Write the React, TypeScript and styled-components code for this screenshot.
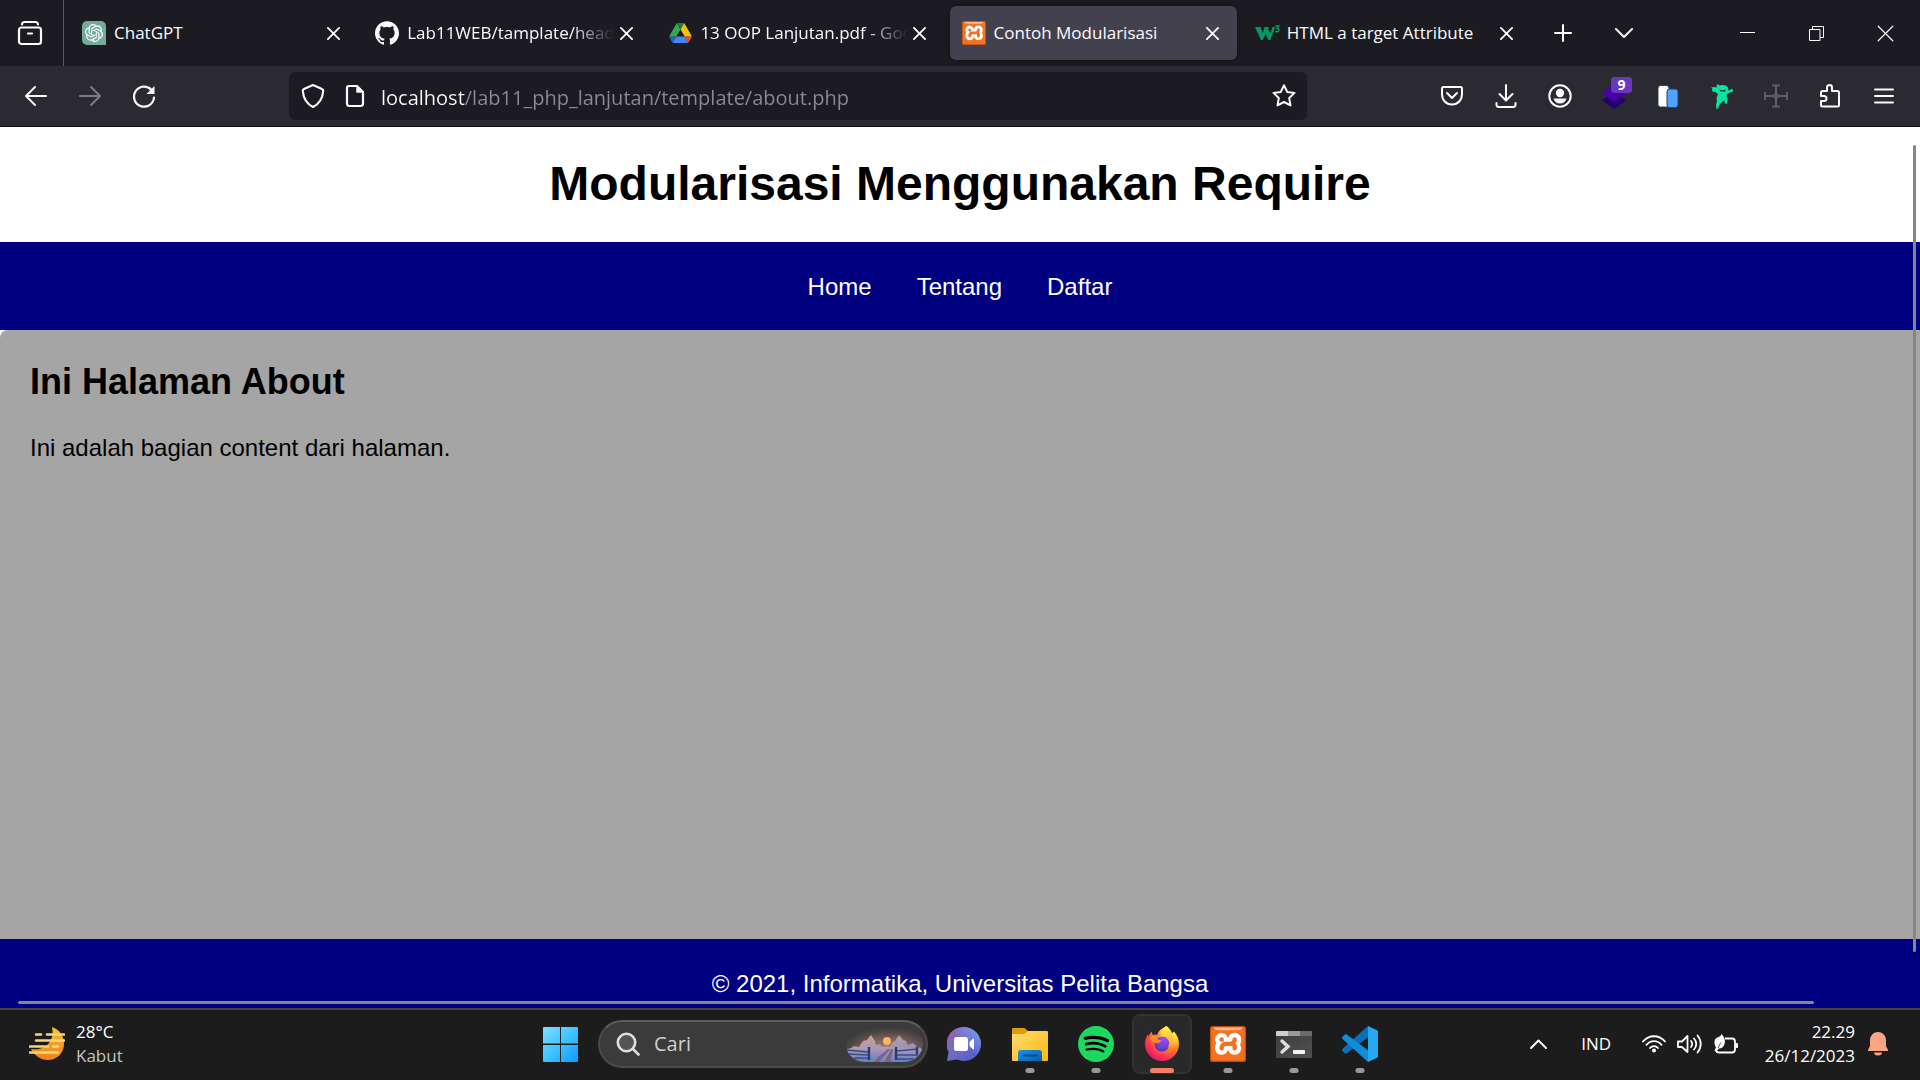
import React from "react";
import styled, { createGlobalStyle, css } from "styled-components";
import { SiOpenai, SiXampp, SiSpotify, SiGithub } from "react-icons/si";

const ui = `"Open Sans", "Noto Sans", "Liberation Sans", sans-serif`;
const arial = `"Liberation Sans", Arial, sans-serif`;

const GlobalStyle = createGlobalStyle`
  *, *::before, *::after { box-sizing: border-box; }
  body { margin: 0; }
  button, input { font: inherit; color: inherit; border: 0; padding: 0; background: none; outline: none; }
  svg { display: block; flex: none; }
`;

const Screen = styled.div`
  display: flex;
  flex-direction: column;
  height: 100vh;
  overflow: hidden;
  font-family: ${ui};
`;

/* ---------- Browser chrome ---------- */

const TabBar = styled.header`
  display: flex;
  height: 66px;
  flex: none;
  background: #1c1b22;
  color: #fbfbfe;
`;

const ViewButton = styled.button`
  display: grid;
  place-items: center;
  width: 64px;
  padding-right: 4px;
  border-right: 1px solid #5b5b66;
`;

const Tabs = styled.div`
  display: grid;
  grid-template-columns: repeat(5, minmax(0, 1fr));
  gap: 6px;
  flex: 0 1 1468px;
  padding: 6px 2px 6px 6px;
`;

const Tab = styled.div<{ $active?: boolean }>`
  display: flex;
  align-items: center;
  height: 54px;
  padding: 0 12px;
  border-radius: 6px;
  ${(p) =>
    p.$active &&
    css`
      background: #42414d;
      box-shadow: 0 0 4px rgba(0, 0, 0, 0.5);
    `}
`;

const TabTitle = styled.button<{ $fade?: boolean }>`
  display: flex;
  align-items: center;
  flex: 1;
  min-width: 0;
  gap: 8px;
  font-size: 17px;
  line-height: 24px;
  text-align: left;
  white-space: nowrap;
  overflow: hidden;
  ${(p) =>
    p.$fade &&
    css`
      mask-image: linear-gradient(to left, transparent, #000 44px);
    `}
`;

const Favicon = styled.span`
  display: grid;
  place-items: center;
  width: 24px;
  height: 24px;
  flex: none;
`;

const CloseButton = styled.button`
  display: grid;
  place-items: center;
  width: 24px;
  height: 24px;
`;

const StripButton = styled.button`
  display: grid;
  place-items: center;
  width: 61px;
`;

const WindowControls = styled.div`
  display: flex;
  margin-left: auto;
`;

const WindowButton = styled.button`
  display: grid;
  place-items: center;
  width: 69px;
`;

const Toolbar = styled.div`
  display: flex;
  align-items: center;
  justify-content: space-between;
  flex: none;
  height: 61px;
  padding: 0 9px;
  background: #2b2a33;
  border-bottom: 1px solid #0c0c0d;
  color: #fbfbfe;
`;

const ToolGroup = styled.div`
  display: flex;
`;

const ToolButton = styled.button`
  display: grid;
  place-items: center;
  position: relative;
  width: 54px;
  height: 48px;
  &:disabled {
    color: #7d7c83;
  }
`;

const Badge = styled.span`
  position: absolute;
  top: 5px;
  left: 24px;
  width: 21px;
  height: 16px;
  border-radius: 3px;
  background: #6a37bd;
  color: #fff;
  font-size: 14px;
  font-weight: 700;
  line-height: 16px;
  text-align: center;
`;

const AddressBar = styled.label`
  display: flex;
  align-items: center;
  flex: 0 1 1018px;
  height: 48px;
  margin-left: 118px;
  margin-right: auto;
  padding: 0 12px;
  border-radius: 6px;
  background: #1c1b22;
`;

const AddressIcon = styled.span`
  display: grid;
  place-items: center;
  width: 42px;
  &:first-child {
    width: 24px;
    margin-right: 9px;
  }
`;

const AddressInput = styled.input`
  flex: 1;
  min-width: 0;
  margin-left: 5px;
  height: 48px;
  padding-top: 2px;
  font-size: 20px;
  background: linear-gradient(to right, #fbfbfe 84px, #8b8a93 84px);
  background-clip: text;
  -webkit-background-clip: text;
  color: transparent;
`;

const StarButton = styled.button`
  display: grid;
  place-items: center;
  width: 24px;
`;

/* ---------- Web page ---------- */

const Viewport = styled.div`
  position: relative;
  display: flex;
  flex-direction: column;
  flex: 1;
  min-height: 0;
  overflow: hidden;
  background: #fff;
  color: #000;
  font-family: ${arial};
  font-size: 24px;
  line-height: 28px;
`;

const PageTitle = styled.h1`
  margin: 0;
  padding: 29px 30px 31px;
  font-size: 48px;
  line-height: 55px;
  text-align: center;
`;

const PageNav = styled.nav`
  display: flex;
  justify-content: center;
  gap: 45px;
  padding: 31px 30px 29px;
  background: #000080;
`;

const NavLink = styled.a`
  color: #fff;
  text-decoration: none;
`;

const Content = styled.main`
  flex: 1;
  padding: 31px 30px;
  background: #a5a5a5;
  border-top-left-radius: 8px;
`;

const ContentTitle = styled.h2`
  margin: 0 0 31px;
  font-size: 36px;
  line-height: 42px;
`;

const Paragraph = styled.p`
  margin: 0;
`;

const PageFooter = styled.footer`
  padding: 31px 30px 10px;
  background: #000080;
  color: #fff;
  text-align: center;
`;

const VerticalThumb = styled.div`
  position: absolute;
  top: 18px;
  right: 4px;
  bottom: 56px;
  width: 3px;
  border-radius: 2px;
  background: #868686;
`;

const HorizontalThumb = styled.div`
  position: absolute;
  left: 18px;
  right: 106px;
  bottom: 4px;
  height: 3px;
  border-radius: 2px;
  background: #868686;
`;

/* ---------- Taskbar ---------- */

const Taskbar = styled.footer`
  display: grid;
  grid-template-columns: 1fr auto 1fr;
  align-items: center;
  flex: none;
  height: 72px;
  padding-bottom: 2px;
  border-top: 2px solid #434343;
  background: #1c1c1c;
  color: #fff;
  font-size: 17px;
  line-height: 24px;
`;

const Weather = styled.button`
  display: flex;
  align-items: center;
  justify-self: start;
  gap: 11px;
  padding-left: 29px;
  text-align: left;
`;

const Stack = styled.span`
  display: flex;
  flex-direction: column;
`;

const Muted = styled.span`
  color: #c4c4c4;
`;

const Apps = styled.div`
  display: flex;
  align-items: center;
  gap: 6px;
`;

const AppButton = styled.button<{ $active?: boolean }>`
  display: grid;
  place-items: center;
  position: relative;
  width: 60px;
  height: 60px;
  border: 2px solid transparent;
  border-radius: 8px;
  ${(p) =>
    p.$active &&
    css`
      background: #292929;
      border-color: #323232;
    `}
`;

const Running = styled.span<{ $active?: boolean }>`
  position: absolute;
  bottom: -1px;
  left: 50%;
  transform: translateX(-50%);
  width: ${(p) => (p.$active ? 24 : 9)}px;
  height: 5px;
  border-radius: 3px;
  background: ${(p) => (p.$active ? "#f4806a" : "#999")};
`;

const Search = styled.label`
  display: flex;
  align-items: center;
  width: 330px;
  height: 48px;
  margin-left: 2px;
  padding: 0 2px 0 16px;
  border: 2px solid #4a4a4a;
  border-top-color: #5c5c5c;
  border-radius: 24px;
  background: #3b3b3b;
`;

const SearchInput = styled.input`
  flex: 1;
  min-width: 0;
  margin-left: 14px;
  font-size: 20px;
  &::placeholder {
    color: #cfcfcf;
    opacity: 1;
  }
`;

const Tray = styled.div`
  display: flex;
  align-items: center;
  justify-self: end;
  padding-right: 32px;
`;

const TrayButton = styled.button`
  display: grid;
  place-items: center;
  width: 36px;
  height: 48px;
`;

const Language = styled.button`
  width: 79px;
`;

const Clock = styled.button`
  display: flex;
  flex-direction: column;
  align-items: flex-end;
  padding: 0 13px 0 21px;
`;

/* ---------- Drawings ---------- */

const line = {
  fill: "none",
  stroke: "currentColor",
  strokeWidth: 2,
  strokeLinecap: "round" as const,
  strokeLinejoin: "round" as const,
};

const Cross = ({ size = 13, w = 2 }: { size?: number; w?: number }) => (
  <svg width={size} height={size} viewBox="0 0 14 14" {...line} strokeWidth={w}>
    <path d="M1 1l12 12M13 1L1 13" />
  </svg>
);

const ViewIcon = () => (
  <svg width="26" height="26" viewBox="0 0 26 26" {...line}>
    <path d="M5 4.500C5 3 6 2 8 2h10c2 0 3 1 3 2.500" strokeWidth="2.2" />
    <rect x="2" y="7.5" width="22" height="16.5" rx="2.5" strokeWidth="2.2" />
    <path d="M11 13.500h4" strokeWidth="2.2" />
  </svg>
);

const ChatIcon = () => (
  <svg width="24" height="24" viewBox="0 0 24 24">
    <path d="M5 0h14a5 5 0 0 1 5 5v19H5a5 5 0 0 1-5-5V5a5 5 0 0 1 5-5z" fill="#74aa9c" />
    <SiOpenai x="3" y="3" size={18} color="#fff" />
  </svg>
);

const DriveIcon = () => (
  <svg width="23" height="20" viewBox="0 0 87.3 78">
    <path d="M6.600 66.850l3.850 6.650c.8 1.400 1.950 2.500 3.300 3.300l13.750-23.800H0c0 1.550.4 3.100 1.200 4.500z" fill="#1967d2" />
    <path d="M43.650 25L29.900 1.200c-1.350.8-2.500 1.900-3.300 3.300l-25.400 44A9.060 9.060 0 0 0 0 53h27.500z" fill="#34a853" />
    <path d="M73.550 76.800c1.350-.8 2.500-1.900 3.300-3.300l1.600-2.750 7.650-13.250c.8-1.400 1.200-2.950 1.200-4.500H59.800l5.850 11.500z" fill="#ea4335" />
    <path d="M43.650 25L57.400 1.200C56.050.4 54.500 0 52.900 0H34.400c-1.600 0-3.150.45-4.500 1.200z" fill="#188038" />
    <path d="M59.800 53H27.500L13.750 76.800c1.350.8 2.900 1.200 4.500 1.200h50.800c1.600 0 3.150-.45 4.500-1.200z" fill="#4285f4" />
    <path d="M73.400 26.500l-12.700-22c-.8-1.400-1.950-2.500-3.300-3.300L43.650 25 59.800 53h27.450c0-1.550-.4-3.100-1.200-4.500z" fill="#fbbc04" />
  </svg>
);

const XamppIcon = ({ size }: { size: number }) => (
  <svg width={size} height={size} viewBox="0 0 24 24">
    <rect x="2" y="2" width="20" height="20" fill="#fff" />
    <SiXampp size={24} color="#f3711f" />
    <rect x=".4" y=".4" width="23.200" height="23.200" rx="1.500" fill="none" stroke="#b9520f" strokeWidth=".8" />
    <path d="M2.500 1h19c0 1.200-2 1.800-4 1.800h-11c-2 0-4-.6-4-1.800z" fill="#ffb98a" />
  </svg>
);

const W3Icon = () => (
  <svg width="25" height="24" viewBox="0 0 25 24">
    <path d="M0 6h5.500l2.300 6L9.500 6h4.300l-.6 2.200 2.200 4L17.500 6h2.700l-4.700 13h-2.200L10.700 13 7.800 19H6z" fill="#059862" />
    <path d="M20.300 5h3.400l-1.700 2.300c1.600 0 2.200.9 1.800 2.200-.5 1.300-2.200 1.600-3.500.8" fill="none" stroke="#059862" strokeWidth="1.500" />
  </svg>
);

const BackIcon = () => (
  <svg width="24" height="24" viewBox="0 0 24 24" {...line}>
    <path d="M22 12H2.500M11 3L2 12l9 9" />
  </svg>
);

const ForwardIcon = () => (
  <svg width="24" height="24" viewBox="0 0 24 24" {...line}>
    <path d="M2 12h19.500M13 3l9 9-9 9" />
  </svg>
);

const ReloadIcon = () => (
  <svg width="26" height="26" viewBox="0 0 26 26" {...line}>
    <path d="M23 14.500A10 10 0 1 1 20.500 7" strokeWidth="2.200" />
    <path d="M23.500 3v8h-8z" fill="currentColor" stroke="none" />
  </svg>
);

const ShieldIcon = () => (
  <svg width="24" height="26" viewBox="0 0 24 26" {...line} strokeWidth={2.2}>
    <path d="M12 2l9 4c1 .4 1.300 1 1.200 2C21.600 15.500 18 21 12 24 6 21 2.400 15.500 1.800 8c-.1-1 .2-1.600 1.200-2z" />
  </svg>
);

const FileIcon = () => (
  <svg width="20" height="24" viewBox="0 0 20 24" {...line} strokeWidth={2.2}>
    <path d="M4 2h8l6 6v11.500a2.500 2.500 0 0 1-2.500 2.500H4.500A2.500 2.500 0 0 1 2 19.500V4a2 2 0 0 1 2-2z" />
    <path d="M12 2v6h6z" fill="currentColor" strokeWidth="1.500" />
  </svg>
);

const StarIcon = () => (
  <svg width="26" height="26" viewBox="0 0 26 26" {...line} strokeWidth={2}>
    <path d="M13 2.300l3.200 6.600 7.300 1-5.300 5.100 1.300 7.400L13 19l-6.500 3.400L7.800 15 2.500 9.900l7.300-1z" />
  </svg>
);

const PocketIcon = () => (
  <svg width="24" height="22" viewBox="0 0 24 22" {...line}>
    <path d="M3.500 2h17A1.500 1.500 0 0 1 22 3.500V9c0 6-4 10.500-10 10.500S2 15 2 9V3.500A1.500 1.500 0 0 1 3.500 2z" />
    <path d="M7 8l5 5 5-5" />
  </svg>
);

const DownloadIcon = () => (
  <svg width="22" height="24" viewBox="0 0 22 24" {...line}>
    <path d="M11 1v15M4.500 10l6.500 6.500L17.500 10M1.500 19v1.500A2.500 2.500 0 0 0 4 23h14a2.500 2.500 0 0 0 2.500-2.500V19" />
  </svg>
);

const AccountIcon = () => (
  <svg width="24" height="24" viewBox="0 0 24 24">
    <circle cx="12" cy="12" r="10.700" fill="none" stroke="currentColor" strokeWidth="2" />
    <circle cx="12" cy="9" r="4.200" fill="currentColor" />
    <path d="M5.500 14.500h13c-.7 3-3.200 5-6.500 5s-5.800-2-6.500-5z" fill="currentColor" />
  </svg>
);

const LayersIcon = () => (
  <svg width="24" height="26" viewBox="0 0 24 26">
    <path d="M12 9l12 8-12 9L0 17z" fill="#1f0070" />
    <path d="M12 1l12 9-12 9L0 10z" fill="#4a00a8" />
  </svg>
);

const CardsIcon = () => (
  <svg width="22" height="24" viewBox="0 0 22 24">
    <rect x="1" y="1.500" width="11" height="21.500" rx="2.500" fill="#fff" stroke="#26406b" />
    <rect x="10" y="5" width="11" height="18.500" rx="2.500" fill="#4da3ff" stroke="#26406b" />
  </svg>
);

const SpriteIcon = () => (
  <svg width="24" height="25" viewBox="0 0 24 25">
    <path
      d="M1 3.500L4.500 3 7 3.500l-.5-2L8 0l1.500 1.500L12 1l4 .5 2 2 .5 3L22 5l1 .5-.5 3-1.500-.5-4 2-.5 2.500 1 2-.5 5.500-2-.5-1-3-2 1.500-2.500 2.500L8 24.500 6.500 25 6 21l1-4-.5-3 1.500-4-3-2.500L3.500 8 2 7l.5-2z"
      fill="#0be3a0"
    />
    <path d="M9.500 5.500l3 1 3.500-1-1 2h-4.500z" fill="#2b2a33" />
  </svg>
);

const GridIcon = () => (
  <svg width="24" height="24" viewBox="0 0 24 24" fill="none" stroke="#5e5d63" strokeWidth="2">
    <path d="M12 1v22M1 12h22M8 1.500h8M8 22.500h8M1 8v8M23 8v8" />
    <path d="M9.500 12h5M12 9.500v5" strokeWidth="3.500" />
  </svg>
);

const PuzzleIcon = () => (
  <svg width="24" height="26" viewBox="0 0 24 26" {...line}>
    <path d="M4.500 8H9V4.500a2.500 2.500 0 0 1 5 0V8h5.500A1.500 1.500 0 0 1 21 9.500V22a1.500 1.500 0 0 1-1.500 1.500h-15A1.500 1.500 0 0 1 3 22v-4h3a2.500 2.500 0 0 0 0-5H3V9.500A1.500 1.500 0 0 1 4.500 8z" />
  </svg>
);

const MenuIcon = () => (
  <svg width="20" height="16" viewBox="0 0 20 16" {...line}>
    <path d="M1 1.500h18M1 8h18M1 14.500h18" />
  </svg>
);

const FogIcon = () => (
  <svg width="36" height="36" viewBox="0 0 36 36">
    <defs>
      <linearGradient id="moon" x1="0" y1="0" x2="0" y2="1">
        <stop offset="0" stopColor="#f3c23c" />
        <stop offset="1" stopColor="#f07f1c" />
      </linearGradient>
    </defs>
    <path d="M23 1c8 3 12 9 12 17 0 9-7 16-16 16C11 34 5 29 2 23c9 1 14-1 18-6 4-5 4-11 3-16z" fill="url(#moon)" />
    <path d="M7 8.500h5M18 8.500h17M7 14.500h28M1 20.500h18M24 20.500h5M1 26.500h28" stroke="#f5d677" strokeWidth="2.600" strokeLinecap="round" />
  </svg>
);

const WindowsIcon = () => (
  <svg width="35" height="35" viewBox="0 0 35 35">
    <defs>
      <linearGradient id="win" x1="0" y1="0" x2="1" y2="1">
        <stop offset="0" stopColor="#84dcff" />
        <stop offset=".5" stopColor="#3fc4ff" />
        <stop offset="1" stopColor="#0e97ff" />
      </linearGradient>
    </defs>
    <path d="M1 0h16v16.500H0V1a1 1 0 0 1 1-1zM18 0h16a1 1 0 0 1 1 1v15.500H18zM0 18h17v17H1a1 1 0 0 1-1-1zM18 18h17v16a1 1 0 0 1-1 1H18z" fill="url(#win)" />
  </svg>
);

const SearchIcon = () => (
  <svg width="24" height="24" viewBox="0 0 24 24" fill="none" stroke="#dedede" strokeWidth="2.600" strokeLinecap="round">
    <circle cx="10.500" cy="10.500" r="8.700" fill="#545454" />
    <path d="M17 17l5.500 5.500" />
  </svg>
);

const SceneryIcon = () => (
  <svg width="78" height="40" viewBox="0 0 78 40">
    <defs>
      <radialGradient id="sky" cx=".55" cy=".7" r=".62">
        <stop offset="0" stopColor="#c08a78" />
        <stop offset=".5" stopColor="#7d605c" />
        <stop offset=".8" stopColor="#4f4845" />
        <stop offset="1" stopColor="#3b3b3b" />
      </radialGradient>
      <linearGradient id="snow" x1="0" y1="0" x2="0" y2="1">
        <stop offset="0" stopColor="#b79bb6" />
        <stop offset="1" stopColor="#5f7fc6" />
      </linearGradient>
      <linearGradient id="peak" x1="0" y1="0" x2="1" y2="1">
        <stop offset="0" stopColor="#dba298" />
        <stop offset="1" stopColor="#7d8fc0" />
      </linearGradient>
      <clipPath id="pill">
        <path d="M0 0h58a19 19 0 0 1 0 38H20C9 38 2 32 0 22z" />
      </clipPath>
    </defs>
    <g clipPath="url(#pill)">
      <rect width="78" height="38" fill="url(#sky)" />
      <circle cx="41" cy="17" r="4" fill="#f9b45c" />
      <path d="M2 26l6-4 5 1 4-6 4-1 4-5 4 6 1 4 4-1 2 4 8-1 3-5 2-1 4-6 4 5 3 1 2 4 5-2 4 4 4 1v5H2z" fill="url(#peak)" />
      <path d="M0 25c20-3 50-3 78 0v14H0z" fill="url(#snow)" />
      <path d="M42 25c-4 4-11 8-14 13h5c3-5 9-9 11-13zM47 25c0 5-3 8-2 13h-6c1-5 5-9 6-13z" fill="#7c6280" />
      <path d="M0 26l22 2M2 30l20 1M8 34h14M50 27l22-2M50 31h22M50 35h18" stroke="#384c82" strokeWidth="1.600" />
      <path d="M23 23v13M50 23v13M71 23v7" stroke="#2a3b68" strokeWidth="2.400" />
    </g>
  </svg>
);

const MeetIcon = () => (
  <svg width="34" height="34" viewBox="0 0 34 34">
    <defs>
      <linearGradient id="meet" x1="0" y1="0" x2="1" y2="1">
        <stop offset="0" stopColor="#9a62a8" />
        <stop offset=".5" stopColor="#6f6bc4" />
        <stop offset="1" stopColor="#4a5cc8" />
      </linearGradient>
      <linearGradient id="meetGlow" x1="0" y1="1" x2="1" y2="0">
        <stop offset=".5" stopColor="#7aa0ef" stopOpacity="0" />
        <stop offset="1" stopColor="#7aa5f5" />
      </linearGradient>
    </defs>
    <path d="M17 0a17 17 0 1 1-7 32.500L0 34l1.500-9A17 17 0 0 1 17 0z" fill="url(#meet)" />
    <path d="M17 0a17 17 0 1 1-7 32.500L0 34l1.500-9A17 17 0 0 1 17 0z" fill="url(#meetGlow)" />
    <rect x="7" y="10" width="14" height="14" rx="2.500" fill="#fff" />
    <path d="M22.500 15l3.500-3.300c.6-.5 1-.3 1 .5v9.600c0 .8-.4 1-1 .5L22.500 19z" fill="#fff" />
  </svg>
);

const FolderIcon = () => (
  <svg width="36" height="33" viewBox="0 0 36 33">
    <defs>
      <linearGradient id="folder" x1="0" y1="0" x2="1" y2="1">
        <stop offset="0" stopColor="#ffdc72" />
        <stop offset="1" stopColor="#fbb90d" />
      </linearGradient>
      <linearGradient id="folderBlue" x1="0" y1="0" x2="1" y2="1">
        <stop offset="0" stopColor="#1796e6" />
        <stop offset="1" stopColor="#0a5bb0" />
      </linearGradient>
    </defs>
    <path d="M1 0h10.500c1 0 1.500.2 2 .8L16 3v8H0V1a1 1 0 0 1 1-1z" fill="#dd9e04" />
    <path d="M0 6h11c1.500 0 2-.3 3-1.200l1-1c.6-.5 1-.8 2-.8h18a1 1 0 0 1 1 1v28a1 1 0 0 1-1 1H1a1 1 0 0 1-1-1z" fill="url(#folder)" />
    <path d="M6 33v-8a3 3 0 0 1 3-3h18a3 3 0 0 1 3 3v8z" fill="url(#folderBlue)" />
    <path d="M11 27.500h14" stroke="#0a4a8c" strokeWidth="1.800" strokeLinecap="round" />
  </svg>
);

const SpotifyIcon = () => (
  <svg width="36" height="36" viewBox="0 0 24 24">
    <circle cx="12" cy="12" r="11" fill="#000" />
    <SiSpotify size={24} color="#1ed760" />
  </svg>
);

const FirefoxIcon = () => (
  <svg width="36" height="36" viewBox="0 0 36 36">
    <defs>
      <radialGradient id="fox" cx=".78" cy=".12" r="1">
        <stop offset=".1" stopColor="#fff14f" />
        <stop offset=".35" stopColor="#ffc032" />
        <stop offset=".55" stopColor="#ff7a2c" />
        <stop offset=".8" stopColor="#fb3450" />
        <stop offset="1" stopColor="#e0126f" />
      </radialGradient>
      <radialGradient id="globe" cx=".6" cy=".15" r=".9">
        <stop offset="0" stopColor="#a24cf7" />
        <stop offset=".6" stopColor="#7142d8" />
        <stop offset="1" stopColor="#5030a8" />
      </radialGradient>
      <linearGradient id="flame" x1="0" y1="0" x2="0" y2="1">
        <stop offset="0" stopColor="#fff44f" />
        <stop offset="1" stopColor="#ff9a2c" />
      </linearGradient>
    </defs>
    <path
      d="M22.500 0c2.500 2 4.500 4.500 5.500 7.500l2-2c3.500 4 5 8 5 12.500C35 27.500 27.500 35 18 35S1 27.500 1 18c0-4 1-7 3-10l.5 3C5 8.500 6 7 8 5.500c-.2 1.500.2 2.500 1 3.500 1.500-.5 3-.5 4.500 0C14.500 4 17.500 3 22.500 0z"
      fill="url(#fox)"
    />
    <circle cx="18" cy="18" r="7.500" fill="url(#globe)" />
    <path d="M18 8c-2-.5-4 0-5.500 1.300C10 8.500 7.500 9.500 6 12c1.500 4 5 5.500 8 5 2-.5 3.500-1.300 3.300-2.500-2.300 0-4-1-4.300-2.500 1.500-2 3-3 5-4z" fill="#ff8a28" />
    <path d="M22.500 0c4 3.500 6.500 7 6.500 12.500 0 5-2.500 8-5.500 9.500 2.500-4 2.500-8-.5-10.500-2-1.500-4-1.500-5.500-1.500 0-5 2-8 5-10z" fill="url(#flame)" />
  </svg>
);

const TerminalIcon = () => (
  <svg width="36" height="27" viewBox="0 0 36 27">
    <defs>
      <linearGradient id="term" x1="0" y1="0" x2="1" y2="1">
        <stop offset="0" stopColor="#3c3c3c" />
        <stop offset="1" stopColor="#505050" />
      </linearGradient>
    </defs>
    <rect width="36" height="27" rx="1" fill="url(#term)" />
    <path d="M1 0h11v5H0V1a1 1 0 0 1 1-1z" fill="#cecece" />
    <path d="M12 0h12v5H12z" fill="#9a9a9a" />
    <path d="M24 0h11a1 1 0 0 1 1 1v4H24z" fill="#6c6c6c" />
    <path d="M6 10l6 5.500L6 21" fill="none" stroke="#dcdcdc" strokeWidth="3.400" strokeLinecap="round" />
    <rect x="17" y="19" width="12" height="4" rx=".8" fill="#f2f2f2" />
  </svg>
);

const CodeIcon = () => (
  <svg width="36" height="36" viewBox="0 0 36 36">
    <path d="M26 0L.8 22.500c-1 .9-1 2 0 3l1.800 1.700c.8.600 1.500.6 2.300.1L27 10.500z" fill="#0a6fb8" />
    <path d="M26 36L.8 13.300c-1-.9-1-2 0-3l1.800-1.600c.8-.6 1.500-.6 2.300-.1L27 25z" fill="#128bd8" />
    <path d="M26 0l9 4.200c.7.300 1 .8 1 1.500v24.600c0 .7-.3 1.200-1 1.500L26 36z" fill="#27a8f2" />
  </svg>
);

const WifiIcon = () => (
  <svg width="24" height="18" viewBox="0 0 24 18" {...line} strokeWidth={1.8}>
    <path d="M1 6.500C7-.5 17-.5 23 6.500M4.500 9.800c4.200-4.800 10.800-4.800 15 0M8 13c2.300-2.500 5.700-2.500 8 0" />
    <circle cx="12" cy="15.500" r="2" fill="currentColor" stroke="none" />
  </svg>
);

const SpeakerIcon = () => (
  <svg width="25" height="20" viewBox="0 0 25 20" {...line} strokeWidth={1.8}>
    <path d="M1 7.500h4L10.500 2v16L5 13H1zM14 7c1.500 1.800 1.500 4.200 0 6M17 4.500c3 3.200 3 7.800 0 11M20.500 1.500c4.300 5 4.300 12 0 17" />
  </svg>
);

const BatteryIcon = () => (
  <svg width="24" height="20" viewBox="0 0 24 20">
    <path d="M11 4.500h7a3 3 0 0 1 3 3v8a3 3 0 0 1-3 3H5a3 3 0 0 1-3-2.500" fill="none" stroke="currentColor" strokeWidth="1.800" />
    <path d="M21.500 9H23a1 1 0 0 1 1 1v3a1 1 0 0 1-1 1h-1.500z" fill="currentColor" />
    <path d="M7.500 0c3 3 4 6.500 3 10-.8 3-3 4.500-5.500 4.500L2 17.500l-1.500-1L2 13.500C-1 8 .5 4 4.500 3c1.500-.5 2.500-1.500 3-3z" fill="currentColor" />
    <path d="M4 14c1-2.500 2-4 3-5.500" stroke="#1c1c1c" strokeWidth=".8" fill="none" />
  </svg>
);

const BellIcon = () => (
  <svg width="20" height="24" viewBox="0 0 20 24" fill="#fba583">
    <path d="M10 0a8 8 0 0 1 8 8v6l2 4c.2.600 0 1-.6 1H.6C0 19-.2 18.600 0 18l2-4V8a8 8 0 0 1 8-8z" />
    <path d="M6 20.500h8a4 3 0 0 1-8 0z" />
  </svg>
);

/* ---------- Data ---------- */

const tabs = [
  { title: "ChatGPT", icon: <ChatIcon /> },
  { title: "Lab11WEB/tamplate/head", icon: <SiGithub size={24} />, fade: true },
  { title: "13 OOP Lanjutan.pdf - Goo", icon: <DriveIcon />, fade: true },
  { title: "Contoh Modularisasi", icon: <XamppIcon size={24} />, active: true },
  { title: "HTML a target Attribute", icon: <W3Icon /> },
];

const tools = [
  { name: "Pocket", icon: <PocketIcon /> },
  { name: "Downloads", icon: <DownloadIcon /> },
  { name: "Account", icon: <AccountIcon /> },
  { name: "Layers", icon: <LayersIcon />, badge: "9" },
  { name: "Cards", icon: <CardsIcon /> },
  { name: "Sprite", icon: <SpriteIcon /> },
  { name: "Grid", icon: <GridIcon /> },
  { name: "Extensions", icon: <PuzzleIcon /> },
  { name: "Menu", icon: <MenuIcon /> },
];

const apps = [
  { name: "File Explorer", icon: <FolderIcon /> },
  { name: "Spotify", icon: <SpotifyIcon /> },
  { name: "Firefox", icon: <FirefoxIcon />, active: true },
  { name: "XAMPP", icon: <XamppIcon size={36} /> },
  { name: "Terminal", icon: <TerminalIcon /> },
  { name: "Visual Studio Code", icon: <CodeIcon /> },
];

export default function App() {
  return (
    <Screen>
      <GlobalStyle />
      <TabBar>
        <ViewButton aria-label="Firefox View">
          <ViewIcon />
        </ViewButton>
        <Tabs>
          {tabs.map((t) => (
            <Tab key={t.title} $active={t.active}>
              <TabTitle $fade={t.fade}>
                <Favicon>{t.icon}</Favicon>
                {t.title}
              </TabTitle>
              <CloseButton aria-label="Close tab">
                <Cross />
              </CloseButton>
            </Tab>
          ))}
        </Tabs>
        <StripButton aria-label="New tab">
          <svg width="18" height="18" viewBox="0 0 18 18" {...line}>
            <path d="M9 1v16M1 9h16" />
          </svg>
        </StripButton>
        <StripButton aria-label="List all tabs">
          <svg width="18" height="11" viewBox="0 0 18 11" {...line}>
            <path d="M1 1l8 8 8-8" />
          </svg>
        </StripButton>
        <WindowControls>
          <WindowButton aria-label="Minimize">
            <svg width="15" height="2" viewBox="0 0 15 2">
              <path d="M0 .5h15" stroke="currentColor" />
            </svg>
          </WindowButton>
          <WindowButton aria-label="Restore">
            <svg width="15" height="15" viewBox="0 0 15 15" fill="none" stroke="currentColor">
              <path d="M.5 3.500h10.500v11H.5zM3.500 3.500v-3h11v11H11" />
            </svg>
          </WindowButton>
          <WindowButton aria-label="Close">
            <Cross size={17} w={1} />
          </WindowButton>
        </WindowControls>
      </TabBar>

      <Toolbar>
        <ToolGroup>
          <ToolButton aria-label="Back">
            <BackIcon />
          </ToolButton>
          <ToolButton aria-label="Forward" disabled>
            <ForwardIcon />
          </ToolButton>
          <ToolButton aria-label="Reload">
            <ReloadIcon />
          </ToolButton>
        </ToolGroup>
        <AddressBar>
          <AddressIcon>
            <ShieldIcon />
          </AddressIcon>
          <AddressIcon>
            <FileIcon />
          </AddressIcon>
          <AddressInput
            aria-label="Address"
            spellCheck={false}
            defaultValue="localhost/lab11_php_lanjutan/template/about.php"
          />
          <StarButton aria-label="Bookmark this page">
            <StarIcon />
          </StarButton>
        </AddressBar>
        <ToolGroup>
          {tools.map((t) => (
            <ToolButton key={t.name} aria-label={t.name}>
              {t.icon}
              {t.badge && <Badge>{t.badge}</Badge>}
            </ToolButton>
          ))}
        </ToolGroup>
      </Toolbar>

      <Viewport>
        <PageTitle>Modularisasi Menggunakan Require</PageTitle>
        <PageNav>
          <NavLink href="#home">Home</NavLink>
          <NavLink href="#about">Tentang</NavLink>
          <NavLink href="#daftar">Daftar</NavLink>
        </PageNav>
        <Content>
          <ContentTitle>Ini Halaman About</ContentTitle>
          <Paragraph>Ini adalah bagian content dari halaman.</Paragraph>
        </Content>
        <PageFooter>© 2021, Informatika, Universitas Pelita Bangsa</PageFooter>
        <VerticalThumb />
        <HorizontalThumb />
      </Viewport>

      <Taskbar>
        <Weather>
          <FogIcon />
          <Stack>
            <span>28°C</span>
            <Muted>Kabut</Muted>
          </Stack>
        </Weather>
        <Apps>
          <AppButton aria-label="Start">
            <WindowsIcon />
          </AppButton>
          <Search>
            <SearchIcon />
            <SearchInput aria-label="Cari" placeholder="Cari" />
            <SceneryIcon />
          </Search>
          <AppButton aria-label="Chat">
            <MeetIcon />
          </AppButton>
          {apps.map((a) => (
            <AppButton key={a.name} aria-label={a.name} $active={a.active}>
              {a.icon}
              <Running $active={a.active} />
            </AppButton>
          ))}
        </Apps>
        <Tray>
          <TrayButton aria-label="Show hidden icons">
            <svg width="17" height="10" viewBox="0 0 17 10" {...line}>
              <path d="M1 9l7.500-7.500L16 9" />
            </svg>
          </TrayButton>
          <Language>IND</Language>
          <TrayButton aria-label="Network">
            <WifiIcon />
          </TrayButton>
          <TrayButton aria-label="Volume">
            <SpeakerIcon />
          </TrayButton>
          <TrayButton aria-label="Battery">
            <BatteryIcon />
          </TrayButton>
          <Clock>
            <span>22.29</span>
            <span>26/12/2023</span>
          </Clock>
          <BellIcon />
        </Tray>
      </Taskbar>
    </Screen>
  );
}
